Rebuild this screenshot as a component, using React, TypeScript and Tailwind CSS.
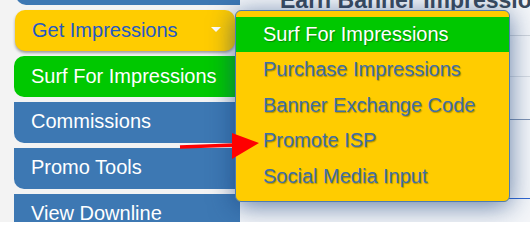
const sideItems = ["Commissions", "Promo Tools", "View Downline"];
const menuItems = ["Purchase Impressions", "Banner Exchange Code", "Promote ISP", "Social Media Input"];

export default function App() {
  return (
    <div className="relative flex h-[222px] w-[530px] overflow-hidden bg-[#f3f3f3] font-['Liberation_Sans',Arial,sans-serif]">
      {/* sidebar */}
      <div className="mt-[-36px] flex w-[240px] shrink-0 flex-col gap-[5px] pl-[14px]">
        <div className="ml-[2px] h-[41px] shrink-0 rounded-bl-[10px] bg-[#3d78b3]" />
        <div className="ml-[1px] mr-[5px] flex h-[41px] shrink-0 items-center justify-between rounded-[10px] bg-[#ffcc00] pb-[2px] pl-[17px] pr-[14px] text-[20px] text-[#2459c4] shadow-[0_2px_3px_rgba(0,0,0,0.35)]">
          <span>Get Impressions</span>
          <span className="h-0 w-0 border-x-[5px] border-t-[5px] border-x-transparent border-t-white" />
        </div>
        <div className="flex h-[41px] shrink-0 items-center rounded-l-[10px] bg-[#00c800] pb-[2px] pl-[17px] text-[20px] text-white">
          Surf For Impressions
        </div>
        {sideItems.map((label) => (
          <div
            key={label}
            className="flex h-[41px] shrink-0 items-center rounded-bl-[10px] bg-[#3d78b3] pb-[3px] pl-[17px] text-[20px] text-white"
          >
            {label}
          </div>
        ))}
      </div>

      {/* page content behind the menu */}
      <div className="relative flex-1 bg-[#f4f6f9]">
        <h1 className="mt-[-17px] pl-[40px] text-[23px] font-bold whitespace-nowrap text-[#3b4a5c]">
          Earn Banner Impressions
        </h1>
        <div className="mt-[17px] border-t border-[#cfd4da]" />
        <div className="flex h-[40px] items-center justify-end text-[18px] whitespace-nowrap text-[#555]">
          <span className="mr-[-4px]">om</span>
        </div>
        <div className="border-t border-[#d6dbe1]" />
        <div className="h-[42px]" />
        <div className="border-t border-[#7f93b2]" />
        <div className="flex h-[78px] items-center justify-end">
          <span className="mr-[-6px] mt-[26px] text-[22px] text-[#2f7cc1]">Bo</span>
        </div>
        <div className="border-t border-[#2f66d0]" />
        <div className="mt-[27px] ml-[190px] h-[10px] bg-[#1c2a44]" />
      </div>

      {/* dropdown menu */}
      <div className="absolute left-[235px] top-[10px] flex w-[275px] flex-col rounded-[6px] border border-[#4d7cb2] bg-[#ffcc00] pt-[6px] pb-[6px] text-[20px] shadow-[0_4px_26px_rgba(20,60,120,0.65)]">
        <div className="flex h-[35px] items-center bg-[#00c800] pb-[2px] pl-[27px] text-white [text-shadow:1px_1px_1px_rgba(0,0,0,0.3)]">
          Surf For Impressions
        </div>
        {menuItems.map((label) => (
          <div
            key={label}
            className="flex h-[35.7px] items-center pb-[2px] pl-[27px] text-[#3f6fa6] [text-shadow:1px_1px_1px_rgba(0,0,0,0.3)]"
          >
            {label}
          </div>
        ))}
      </div>

      {/* red arrow */}
      <svg className="absolute left-[178px] top-[131px]" width="84" height="30" viewBox="0 0 84 30">
        <line x1="2" y1="16" x2="58" y2="14" stroke="#ff0000" strokeWidth="3.5" />
        <polygon points="54,2 81,12 54,28" fill="#ff0000" />
      </svg>
    </div>
  );
}
